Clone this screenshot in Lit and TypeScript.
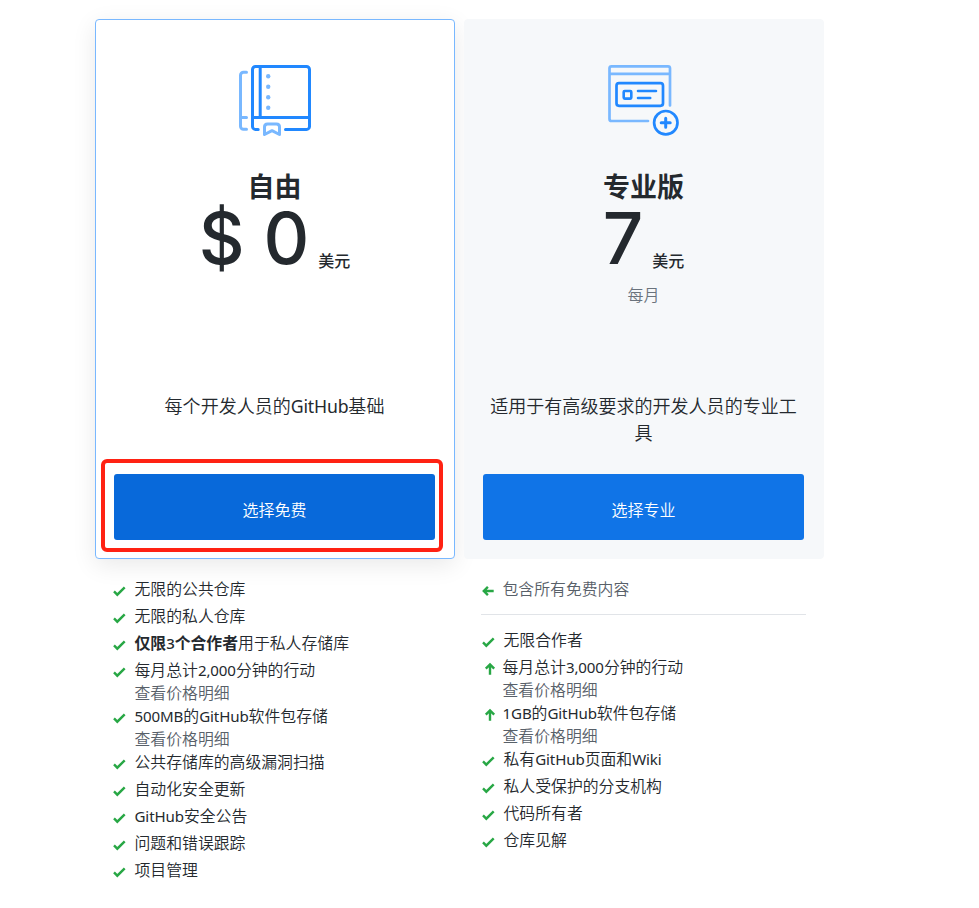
import { LitElement, html, css, svg } from "lit";
import { customElement, property } from "lit/decorators.js";

type IconName = "check" | "left" | "up";
interface Feature { icon: IconName; text: string; strong?: string; link?: boolean; }

const mix = (text: string) =>
  text.split(/([A-Za-z0-9,]+)/).filter(Boolean).map((part) =>
    /^[A-Za-z0-9,]/.test(part) ? html`<span class="latin">${part}</span>` : part);

const iconPaths = {
  check: svg`<path d="M2 7.4 5.3 10.7 12.7 3.3"/>`,
  left: svg`<path d="M12.7 7H2.9M6.9 2.9 2.8 7l4.1 4.1"/>`,
  up: svg`<path d="M9 12.7V2.8M4.8 6.7 9 2.5l4.2 4.2"/>`,
};

const free: Feature[] = [
  { icon: "check", text: "无限的公共仓库" },
  { icon: "check", text: "无限的私人仓库" },
  { icon: "check", strong: "仅限3个合作者", text: "用于私人存储库" },
  { icon: "check", text: "每月总计2,000分钟的行动", link: true },
  { icon: "check", text: "500MB的GitHub软件包存储", link: true },
  { icon: "check", text: "公共存储库的高级漏洞扫描" },
  { icon: "check", text: "自动化安全更新" },
  { icon: "check", text: "GitHub安全公告" },
  { icon: "check", text: "问题和错误跟踪" },
  { icon: "check", text: "项目管理" },
];
const pro: Feature[] = [
  { icon: "check", text: "无限合作者" },
  { icon: "up", text: "每月总计3,000分钟的行动", link: true },
  { icon: "up", text: "1GB的GitHub软件包存储", link: true },
  { icon: "check", text: "私有GitHub页面和Wiki" },
  { icon: "check", text: "私人受保护的分支机构" },
  { icon: "check", text: "代码所有者" },
  { icon: "check", text: "仓库见解" },
];

@customElement("feature-row")
export class FeatureRow extends LitElement {
  @property({ attribute: false }) item!: Feature;
  @property({ type: Boolean }) muted = false;
  static styles = css`
    :host { display: block; }
    .row { display: flex; height: 27px; line-height: 23px; font-size: 15.85px; white-space: nowrap; }
    .row.tall { height: 46px; }
    .line { height: 23px; }
    .muted, .link { color: #586069; }
    .icon { flex: none; width: 15px; height: 14px; margin: 7px 7.5px 0 0; fill: none; stroke: #28a745; stroke-width: 2.4; }
    .icon.arrow { margin-right: 6.5px; }
    .latin { font-family: "Noto Sans", sans-serif; font-size: 15.1px; letter-spacing: -0.12px; line-height: 1; font-weight: 400; }
    .link { display: block; height: 23px; }
    strong { font-weight: 700; }
    strong .latin { font-size: 15px; font-weight: 500; }
  `;
  render() {
    const f = this.item;
    return html`<div class="row ${this.muted ? "muted" : ""} ${f.link ? "tall" : ""}">
      <svg class="icon ${f.icon === "check" ? "" : "arrow"}" viewBox="0 0 15 14">${iconPaths[f.icon]}</svg>
      <div><div class="line">${f.strong ? html`<strong>${mix(f.strong)}</strong>` : ""}${mix(f.text)}</div>${f.link ? html`<span class="link">查看价格明细</span>` : ""}</div>
    </div>`;
  }
}

@customElement("app-root")
export class AppRoot extends LitElement {
  static styles = css`
    :host { display: block; min-height: 908px; box-sizing: border-box; padding: 19px 0 0 95px; background: #fff; color: #24292e; font-family: "Noto Sans CJK SC", sans-serif; font-weight: 350; }
    .plans { display: grid; grid-template-columns: 360px 360px; column-gap: 9px; }
    .card { position: relative; box-sizing: border-box; height: 540px; padding: 0 19px 0 18px; border: 1px solid #f6f8fa; border-radius: 4px; background: #f6f8fa; display: flex; flex-direction: column; text-align: center; }
    .card.free { background: #fff; border-color: #79b8ff; box-shadow: 0 6px 24px rgba(0, 0, 0, 0.09); }
    .art { height: 90px; width: 100px; flex: none; margin: 35px auto 0 111px; fill: none; stroke-width: 3; stroke-linecap: round; stroke-linejoin: round; }
    .pro .art { margin-left: 112px; }
    .dark { stroke: #2188ff; }
    .light { stroke: #79b8ff; }
    .dots { fill: #79b8ff; }
    h2 { margin: 25px 0 0; font-size: 27px; line-height: 32px; font-weight: 700; }
    .price { font-family: Inter, sans-serif; font-size: 71px; line-height: 72px; font-weight: 450; height: 72px; white-space: pre; }
    .unit { font-family: "Noto Sans CJK SC", sans-serif; font-size: 16px; font-weight: 500; line-height: 20px; margin-left: 9px; position: relative; top: 3px; }
    .period { height: 24px; line-height: 24px; margin-top: 8px; font-size: 16px; color: #6a737d; }
    .about { margin: 86px 0 0; font-size: 18.05px; line-height: 27px; height: 54px; }
    .about .latin { font-family: "Noto Sans", sans-serif; font-size: 17.7px; letter-spacing: -0.2px; line-height: 1; font-weight: 400; }
    .button { margin: 28px 0 0; flex: none; height: 66px; border: 0; border-radius: 3px; padding: 4px 0 0; background: #1074e7; color: #fff; font: 350 16px "Noto Sans CJK SC", sans-serif; }
    .free .button { background: #0869da; }
    .marker { position: absolute; left: 4.5px; top: 439px; width: 342px; height: 93px; box-sizing: border-box; border: 4px solid #ff2213; border-radius: 6px; }
    .list { padding: 18px 0 0 17px; }
    .included { border-bottom: 1px solid #e1e4e8; width: 325px; height: 37px; margin-bottom: 13px; }
  `;
  render() {
    return html`<main class="plans">
      <section class="card free">
        <svg class="art" viewBox="0 0 100 90">
          <g class="light"><path d="M21.5 17.3h-3a3 3 0 0 0-3 3v51a3 3 0 0 0 3 3h3M15.5 62.5h6M39.5 79.5V72q0-3 3-3h9q3 0 3 3v7.5l-7.5-3.8z"/></g>
          <g class="dots"><circle cx="43.2" cy="21.2" r="2.2"/><circle cx="43.2" cy="31.8" r="2.2"/><circle cx="43.2" cy="42.3" r="2.2"/><circle cx="43.2" cy="52.8" r="2.2"/></g>
          <g class="dark"><path d="M33.2 74.4h-2.7a3 3 0 0 1-3-3V14.5a3 3 0 0 1 3-3h51a3 3 0 0 1 3 3v56.9a3 3 0 0 1-3 3H60.5M35.2 12v50M28 62.5h56"/></g>
        </svg>
        <h2>自由</h2>
        <div class="price">$ 0<span class="unit">美元</span></div>
        <div class="period"></div>
        <p class="about">${mix("每个开发人员的GitHub基础")}</p>
        <button class="button">选择免费</button>
        <div class="marker"></div>
      </section>
      <section class="card pro">
        <svg class="art" viewBox="0 0 100 90">
          <g class="light" stroke-width="2.7"><path d="M53 66H16.5a2 2 0 0 1-2-2V13.3a2 2 0 0 1 2-2H73a2 2 0 0 1 2 2v37.2M14.5 18.8H75"/></g>
          <g class="dark"><rect x="21.5" y="28.2" width="46.5" height="22.6" rx="2.5" stroke-width="2.7"/><rect x="28.7" y="36" width="7.6" height="7.6" rx="1" stroke-width="2.6"/><path stroke-width="2.6" d="M43 36h18M43 43h12.2"/><circle cx="70.8" cy="67.7" r="11.7" stroke-width="2.7"/><path d="M70.7 63.2v9M66.2 67.7h9"/></g>
        </svg>
        <h2>专业版</h2>
        <div class="price">7<span class="unit">美元</span></div>
        <div class="period">每月</div>
        <p class="about">适用于有高级要求的开发人员的专业工具</p>
        <button class="button">选择专业</button>
      </section>
      <div class="list">${free.map((item) => html`<feature-row .item=${item}></feature-row>`)}</div>
      <div class="list">
        <div class="included"><feature-row muted .item=${{ icon: "left", text: "包含所有免费内容" }}></feature-row></div>
        ${pro.map((item) => html`<feature-row .item=${item}></feature-row>`)}
      </div>
    </main>`;
  }
}
